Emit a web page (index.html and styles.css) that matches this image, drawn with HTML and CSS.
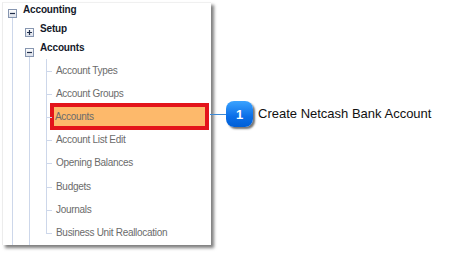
FILE: index.html
```html
<!DOCTYPE html>
<html>
<head>
<meta charset="utf-8">
<link rel="stylesheet" href="styles.css">
</head>
<body>
<div class="page">
  <div class="panel">
    <div class="row">
      <svg class="exp" width="9" height="9" viewBox="0 0 9 9"><defs><linearGradient id="g1" x1="0" y1="0" x2="0" y2="1"><stop offset="0" stop-color="#ffffff"/><stop offset="1" stop-color="#d9dee8"/></linearGradient></defs><rect x="0.5" y="0.5" width="8" height="8" fill="url(#g1)" stroke="#8796b0"/><path d="M2 4.5h5" stroke="#1f2d4a" stroke-width="1.2"/></svg>
      <span class="lbl bold">Accounting</span>
    </div>
    <div class="sub1">
      <div class="row r1">
        <svg class="exp" width="9" height="9" viewBox="0 0 9 9"><defs><linearGradient id="g2" x1="0" y1="0" x2="0" y2="1"><stop offset="0" stop-color="#ffffff"/><stop offset="1" stop-color="#d9dee8"/></linearGradient></defs><rect x="0.5" y="0.5" width="8" height="8" fill="url(#g2)" stroke="#8796b0"/><path d="M2 4.5h5M4.5 2v5" stroke="#1f2d4a" stroke-width="1.2"/></svg>
        <span class="lbl bold">Setup</span>
      </div>
      <div class="row r1 r1b">
        <svg class="exp exp2" width="9" height="9" viewBox="0 0 9 9"><defs><linearGradient id="g3" x1="0" y1="0" x2="0" y2="1"><stop offset="0" stop-color="#ffffff"/><stop offset="1" stop-color="#d9dee8"/></linearGradient></defs><rect x="0.5" y="0.5" width="8" height="8" fill="url(#g3)" stroke="#8796b0"/><path d="M2 4.5h5" stroke="#1f2d4a" stroke-width="1.2"/></svg>
        <span class="lbl bold">Accounts</span>
      </div>
      <div class="sub2">
        <div class="items">
          <div class="item"><span class="txt">Account Types</span></div>
          <div class="item"><span class="txt">Account Groups</span></div>
          <div class="item"><span class="txt hl">Accounts</span></div>
          <div class="item"><span class="txt">Account List Edit</span></div>
          <div class="item"><span class="txt">Opening Balances</span></div>
          <div class="item"><span class="txt">Budgets</span></div>
          <div class="item"><span class="txt">Journals</span></div>
          <div class="item"><span class="txt">Business Unit Reallocation</span></div>
        </div>
      </div>
    </div>
  </div>
  <div class="callout">
    <div class="connector"></div>
    <div class="badge">1</div>
    <div class="note">Create Netcash Bank Account</div>
  </div>
</div>
</body>
</html>
```
FILE: styles.css
```css
html, body {
  margin: 0;
  padding: 0;
  background: #ffffff;
}
body {
  width: 449px;
  height: 256px;
  overflow: hidden;
  font-family: "Liberation Sans", Arial, sans-serif;
}
.page {
  display: flex;
  align-items: flex-start;
  padding: 2px 0 0 2px;
}
.panel {
  width: 209px;
  height: 243px;
  box-sizing: border-box;
  background: #ffffff;
  border-left: 1px solid #ececec;
  border-top: 1px solid #f0f0f0;
  box-shadow: 3px 3px 3px rgba(0, 0, 0, 0.5);
  padding-left: 5px;
  display: flex;
  flex-direction: column;
}
.row {
  height: 19px;
  display: flex;
  align-items: flex-start;
  flex-shrink: 0;
}
.exp {
  display: block;
  margin-top: 6px;
  flex-shrink: 0;
  position: relative;
  z-index: 1;
}
.exp2 {
  margin-top: 7px;
}
.lbl {
  margin-left: 6px;
  line-height: 14px;
  font-size: 10px;
  white-space: nowrap;
}
.bold {
  font-weight: bold;
  color: #15192a;
  letter-spacing: -0.15px;
}
.sub1 {
  flex: 1;
  display: flex;
  flex-direction: column;
  margin-left: 4px;
  margin-top: -5px;
  padding-top: 5px;
  border-left: 1px solid #cdd7ea;
}
.r1 {
  padding-left: 12px;
}
.r1b {
  height: 18px;
}
.sub2 {
  flex: 1;
  margin-left: 16px;
  margin-top: -2px;
  padding-top: 2px;
  border-left: 1px solid #cdd7ea;
}
.items {
  margin-left: 16px;
  display: flex;
  flex-direction: column;
}
.item {
  position: relative;
  height: 23.2px;
  display: flex;
  align-items: center;
  padding-left: 10px;
}
.item::before {
  content: "";
  position: absolute;
  left: 0;
  top: 0;
  bottom: 0;
  border-left: 1px solid #cdd7ea;
}
.item:last-child::before {
  bottom: 50%;
}
.item::after {
  content: "";
  position: absolute;
  left: 0;
  top: 50%;
  width: 6px;
  border-top: 1px solid #cdd7ea;
}
.txt {
  font-size: 10px;
  line-height: 14px;
  color: #6b6b6b;
  letter-spacing: -0.3px;
  white-space: nowrap;
}
.hl {
  display: block;
  width: 151px;
  height: 19px;
  line-height: 19px;
  margin-left: -2px;
  padding-left: 1px;
  box-sizing: border-box;
  background: #fdb96b;
  outline: 4px solid #e3141b;
  position: relative;
  top: -0.5px;
}
.callout {
  display: flex;
  align-items: center;
  margin-left: -1px;
  margin-top: 99px;
}
.connector {
  width: 16px;
  height: 1px;
  background: #3d8ad6;
}
.badge {
  width: 27px;
  height: 26px;
  border-radius: 8px;
  background: linear-gradient(#3ba3ff, #0a6ee8 60%, #005fd6);
  box-shadow: 2px 2px 2px rgba(0, 0, 0, 0.55);
  color: #ffffff;
  font-weight: bold;
  font-size: 13px;
  display: flex;
  align-items: center;
  justify-content: center;
}
.note {
  margin-left: 5px;
  font-size: 13px;
  color: #111111;
  white-space: nowrap;
  margin-top: -2px;
}
```
